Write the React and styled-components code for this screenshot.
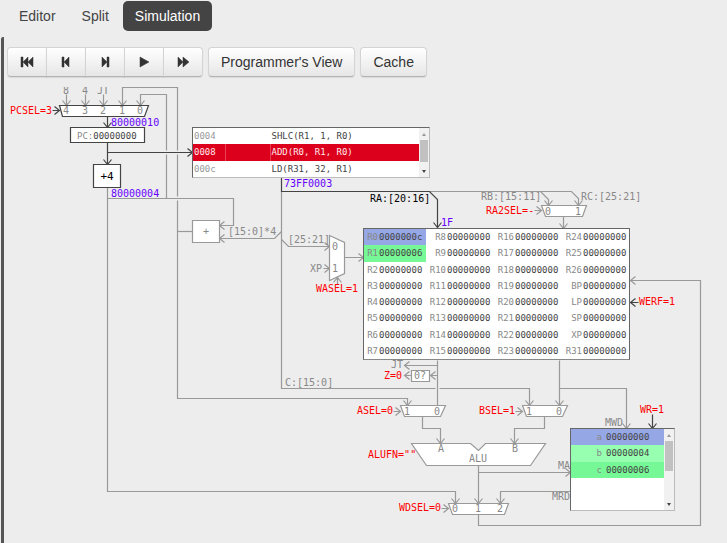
import React from "react";
import styled, { createGlobalStyle } from "styled-components";

const GlobalStyle = createGlobalStyle`
  *, *::before, *::after { box-sizing: border-box; }
  html { background: #ededed; }
  body {
    margin: 0;
    background: #ededed;
    color: #333;
    font: 14px/20px "Liberation Sans", Arial, sans-serif;
  }
`;

const mono = `"DejaVu Sans Mono", "Liberation Mono", monospace`;

const Page = styled.div`
  display: flex;
  flex-direction: column;
  min-height: 100vh;
`;

const Tabs = styled.nav`
  display: flex;
  gap: 2px;
  padding: 1px 7px 6px;
`;

const Tab = styled.a`
  padding: 5px 12px;
  border-radius: 5px;
  color: ${(p) => (p.$active ? "#fff" : "#444")};
  background: ${(p) => (p.$active ? "#444" : "transparent")};
  text-decoration: none;
`;

const Panel = styled.main`
  flex: 1;
  margin-left: 1px;
  border-left: 3px solid #555;
  border-top-left-radius: 2px;
`;

const Toolbar = styled.div`
  display: flex;
  gap: 5px;
  padding: 10px 3px;
`;

const ButtonGroup = styled.div`
  display: flex;
`;

const Button = styled.button`
  display: flex;
  align-items: center;
  justify-content: center;
  height: 30px;
  padding: 0 12px;
  border: 1px solid #d4d4d4;
  border-bottom-color: #b3b3b3;
  border-radius: 4px;
  background: linear-gradient(#fff, #e6e6e6);
  box-shadow: 0 1px 1px rgba(0, 0, 0, 0.08);
  color: #333;
  font: inherit;
  white-space: nowrap;
  cursor: pointer;
`;

const IconButton = styled(Button)`
  width: 40px;
  padding: 0;
  border-radius: 0;
  & + & { margin-left: -1px; }
  &:first-child { border-radius: 4px 0 0 4px; }
  &:last-child { border-radius: 0 4px 4px 0; }
`;

const Viewport = styled.div`
  overflow: hidden;
`;

const Canvas = styled.div`
  position: relative;
  min-width: 700px;
  height: 454px;
`;

const Drawing = styled.svg`
  display: block;
  font: 10px ${mono};
`;

const Node = styled.div`
  position: absolute;
  left: ${(p) => p.$x - 4}px;
  top: ${(p) => p.$y - 87}px;
  width: ${(p) => p.$w}px;
  height: ${(p) => p.$h}px;
  display: flex;
  border: 1px solid #666;
  border-right-color: ${(p) => (p.$inset ? "#bbb" : "#666")};
  border-bottom-color: ${(p) => (p.$inset ? "#bbb" : "#888")};
  background: #fff;
`;

const Table = styled.table`
  flex: 1;
  align-self: flex-start;
  table-layout: fixed;
  border-collapse: collapse;
  width: 0;
  height: ${(p) => p.$h}px;
  font: 9px/12px ${mono};
  color: #444;
`;

const rowColors = {
  blue: "#96a7e6",
  mint: "#96ffb0",
  green: "#77f896",
  red: "#dc001c",
};

const Row = styled.tr`
  background: ${(p) => rowColors[p.$color] || "transparent"};
  color: ${(p) => (p.$color === "red" ? "#ffe8ea" : "inherit")};
`;

const Cell = styled.td`
  padding: 0 0 0 1px;
  white-space: pre;
  vertical-align: middle;
  background: ${(p) => rowColors[p.$color] || "transparent"};
`;

const NameCell = styled(Cell)`
  padding: 0 ${(p) => p.$gap || 0}px 0 0;
  text-align: right;
  color: #888;
`;

const AddressCell = styled(Cell)`
  color: ${(p) => (p.$current ? "#ffe8ea" : "#999")};
  border-right: 1px solid ${(p) => (p.$current ? "#e94054" : "transparent")};
`;

const Scrollbar = styled.div`
  display: flex;
  flex-direction: column;
  align-items: center;
  width: 10px;
  background: #f1f1f1;
`;

const Arrow = styled.span`
  width: 0;
  height: 0;
  margin: ${(p) => (p.$down ? "auto 0 4px" : "5px 0 4px")};
  border: 2px solid transparent;
  border-top: ${(p) => (p.$down ? "3px solid #444" : "0")};
  border-bottom: ${(p) => (p.$down ? "0" : "3px solid #999")};
`;

const Thumb = styled.span`
  width: 8px;
  height: ${(p) => p.$h}px;
  background: #c1c1c1;
`;

const GREY = "#999";
const DARK = "#444";

const transport = [
  ["Reset", "M1 1h2v10H1z M8 1v10L3 6z M13 1v10L8 6z"],
  ["Step back", "M3 1h2v10H3z M10 1v10L5 6z"],
  ["Step forward", "M9 1h2v10H9z M4 1v10l5-5z"],
  ["Play", "M3 1v10l9-5z"],
  ["Fast forward", "M2 1v10l5-5z M7 1v10l6-5z"],
];

function Icon({ d }) {
  return (
    <svg width="14" height="12" viewBox="0 0 14 12" aria-hidden="true">
      <path d={d} fill="#333" stroke="#333" strokeWidth="0.5" strokeLinejoin="round" />
    </svg>
  );
}

const heads = {
  down: "m-4 -5l4 5l4 -5",
  up: "m-4 5l4 -5l4 5",
  right: "m-5 -4l5 4l-5 4",
  left: "m5 -4l-5 4l5 4",
};

function Wire({ d, tip, dir, dark }) {
  const path = tip ? `${d} M${tip}${heads[dir]}` : d;
  return <path d={path} fill="none" stroke={dark ? DARK : GREY} strokeWidth="1.2" />;
}

function Shape({ points, dark }) {
  return <polygon points={points} fill="#fff" stroke={dark ? DARK : GREY} strokeWidth="1.2" />;
}

function Gap({ d }) {
  return <path d={d} fill="none" stroke="#ededed" strokeWidth="4" />;
}

const labels = [
  [66, 94, "8", "#888", "middle"],
  [85, 94, "4", "#888", "middle"],
  [103, 94, "JT", "#888", "middle"],
  [66, 114, "4", "#888", "middle"],
  [85, 114, "3", "#888", "middle"],
  [103, 114, "2", "#888", "middle"],
  [122, 114, "1", "#888", "middle"],
  [140, 114, "0", "#888", "middle"],
  [10, 114, "PCSEL=3", "#f00"],
  [111, 126, "80000010", "#60f"],
  [111, 197, "80000004", "#60f"],
  [284, 187, "73FF0003", "#60f"],
  [441, 226, "1F", "#60f"],
  [370, 202, "RA:[20:16]", "#000"],
  [481, 200, "RB:[15:11]", "#888"],
  [581, 200, "RC:[25:21]", "#888"],
  [486, 214, "RA2SEL=-", "#f00"],
  [548, 215, "0", "#888", "middle"],
  [578, 215, "1", "#888", "middle"],
  [206, 235, "+", "#888", "middle"],
  [228, 235, "[15:0]*4", "#888"],
  [288, 243, "[25:21]", "#888"],
  [310, 272, "XP", "#888"],
  [335, 250, "0", "#888", "middle"],
  [335, 272, "1", "#888", "middle"],
  [316, 292, "WASEL=1", "#f00"],
  [639, 305, "WERF=1", "#f00"],
  [391, 368, "JT", "#888"],
  [384, 379, "Z=0", "#f00"],
  [420, 379, "0?", "#888", "middle"],
  [285, 386, "C:[15:0]", "#888"],
  [357, 414, "ASEL=0", "#f00"],
  [407, 415, "1", "#888", "middle"],
  [437, 415, "0", "#888", "middle"],
  [479, 414, "BSEL=1", "#f00"],
  [529, 415, "1", "#888", "middle"],
  [559, 415, "0", "#888", "middle"],
  [605, 426, "MWD", "#888"],
  [640, 413, "WR=1", "#f00"],
  [441, 452, "A", "#888", "middle"],
  [515, 452, "B", "#888", "middle"],
  [478, 462, "ALU", "#888", "middle"],
  [368, 458, 'ALUFN=""', "#f00"],
  [558, 469, "MA", "#888"],
  [552, 500, "MRD", "#888"],
  [399, 511, "WDSEL=0", "#f00"],
  [455, 512, "0", "#888", "middle"],
  [478, 512, "1", "#888", "middle"],
  [500, 512, "2", "#888", "middle"],
];

function Datapath() {
  return (
    <Drawing width="723" height="454" viewBox="4 87 723 454" role="img" aria-label="Processor datapath">
      <g transform="translate(0.5 0.5)">
        <Wire d="M66 94V105" tip="66 105" dir="down" />
        <Wire d="M85 94V105" tip="85 105" dir="down" />
        <Wire d="M103 94V105" tip="103 105" dir="down" />
        <Wire d="M407 405V398H177V87H122V105" tip="122 105" dir="down" />
        <Wire d="" tip="407 405" dir="down" />
        <Wire d="M166 198V94H140V105" tip="140 105" dir="down" />
        <Gap d="M160 152H182 M171 198H182" />
        <Wire d="M107 187V491H455V503" tip="455 503" dir="down" />
        <Wire d="M107 198H233V225H219" tip="219 225" dir="left" />
        <Wire d="M177 231H192" />
        <Wire d="M281 231L274 238H219" tip="219 238" dir="left" />
        <Wire d="M281 191V388H529V405" tip="529 405" dir="down" />
        <Wire d="M281 239L288 246H329" tip="329 246" dir="right" />
        <Wire d="M323 268H329" tip="329 268" dir="right" />
        <Wire d="M337 284V277" tip="337 277" dir="up" />
        <Wire d="M344 257H363" tip="363 257" dir="right" />
        <Wire d="M429 191H571L578 198V205" tip="578 205" dir="down" />
        <Wire d="M540 191L548 199V205" tip="548 205" dir="down" />
        <Wire d="M534 210H541" tip="541 210" dir="right" />
        <Wire d="M563 216V228" tip="563 228" dir="down" />
        <Gap d="M437 384V392" />
        <Wire d="M437 360V405" />
        <Wire d="M437 365H404" tip="404 365" dir="left" />
        <Wire d="M437 375H430" tip="430 375" dir="left" />
        <Wire d="M411 375H404" tip="404 375" dir="left" />
        <Wire d="M559 360V405" tip="559 405" dir="down" />
        <Wire d="M559 388H626V428" tip="626 428" dir="down" />
        <Wire d="M393 411H400" tip="400 411" dir="right" />
        <Wire d="M515 411H522" tip="522 411" dir="right" />
        <Wire d="M422 416V428H440V443" tip="440 443" dir="down" />
        <Wire d="M544 416V428H514V443" tip="514 443" dir="down" />
        <Wire d="M478 465V503" tip="478 503" dir="down" />
        <Wire d="M478 472H570" tip="570 472" dir="right" />
        <Wire d="M570 491H500V503" tip="500 503" dir="down" />
        <Wire d="M441 508H448" tip="448 508" dir="right" />
        <Wire d="M478 514V525H700V280H630" tip="630 280" dir="left" />

        <Wire d="M52 110H59" tip="59 110" dir="right" dark />
        <Wire d="M107 116V127" tip="107 127" dir="down" dark />
        <Wire d="M107 142V164" tip="107 164" dir="down" dark />
        <Wire d="M107 152H192" tip="192 152" dir="right" dark />
        <Wire d="M281 177V191H429L437 199V227" tip="437 227" dir="down" dark />
        <Wire d="M638 302H630" tip="630 302" dir="left" dark />
        <Wire d="M652 414V428" tip="652 428" dir="down" dark />

        <Shape points="59,105 148,105 144,116 62,116" dark />
        <Shape points="70,127 144,127 144,142 70,142" dark />
        <Shape points="93,164 120,164 120,187 93,187" dark />
        <Shape points="192,220 219,220 219,242 192,242" />
        <Shape points="329,235 344,242 344,273 329,280" />
        <Shape points="541,205 586,205 582,216 545,216" />
        <Shape points="411,370 429,370 429,381 411,381" />
        <Shape points="400,405 445,405 440,416 404,416" />
        <Shape points="522,405 567,405 562,416 526,416" />
        <Shape points="411,443 470,443 478,450 485,443 545,443 530,465 426,465" />
        <Shape points="448,503 508,503 504,514 452,514" />
      </g>

      {labels.map(([x, y, text, fill, anchor]) => (
        <text key={`${x}-${y}`} x={x} y={y} fill={fill} textAnchor={anchor}>
          {text}
        </text>
      ))}
      <text x="77" y="139" fontSize="9" fill="#888">
        PC:<tspan fill="#444">00000000</tspan>
      </text>
      <text x="107" y="180" fontSize="11" fill="#000" textAnchor="middle">
        +4
      </text>
    </Drawing>
  );
}

const instructions = [
  ["0004", "SHLC(R1, 1, R0)"],
  ["0008", "ADD(R0, R1, R0)"],
  ["000c", "LD(R31, 32, R1)"],
];

const registerNames = [
  ["R0", "R8", "R16", "R24"],
  ["R1", "R9", "R17", "R25"],
  ["R2", "R10", "R18", "R26"],
  ["R3", "R11", "R19", "BP"],
  ["R4", "R12", "R20", "LP"],
  ["R5", "R13", "R21", "SP"],
  ["R6", "R14", "R22", "XP"],
  ["R7", "R15", "R23", "R31"],
];

const registerState = {
  R0: { value: "0000000c", color: "blue" },
  R1: { value: "00000006", color: "green" },
};

const memory = [
  ["a", "00000000", "blue"],
  ["b", "00000004", "mint"],
  ["c", "00000006", "green"],
];

function Program() {
  return (
    <Node $x={192} $y={127} $w={238} $h={51} $inset>
      <Table $h={49}>
        <colgroup>
          <col width="32" />
          <col width="45" />
          <col />
        </colgroup>
        <tbody>
          {instructions.map(([address, code]) => {
            const current = address === "0008";
            return (
              <Row key={address} $color={current ? "red" : undefined}>
                <AddressCell $current={current}>{address}</AddressCell>
                <AddressCell $current={current} />
                <Cell>{code}</Cell>
              </Row>
            );
          })}
        </tbody>
      </Table>
      <Scrollbar>
        <Arrow />
        <Thumb $h={22} />
        <Arrow $down />
      </Scrollbar>
    </Node>
  );
}

function Registers() {
  return (
    <Node $x={363} $y={228} $w={267} $h={132}>
      <Table $h={130}>
        <colgroup>
          <col width="14" />
          <col width="48" />
          <col width="20" />
          <col width="48" />
          <col width="20" />
          <col width="48" />
          <col width="20" />
          <col />
        </colgroup>
        <tbody>
          {registerNames.map((names) => (
            <Row key={names[0]}>
              {names.map((name) => {
                const { value = "00000000", color } = registerState[name] || {};
                return (
                  <React.Fragment key={name}>
                    <NameCell $color={color}>{name}</NameCell>
                    <Cell $color={color}>{value}</Cell>
                  </React.Fragment>
                );
              })}
            </Row>
          ))}
        </tbody>
      </Table>
    </Node>
  );
}

function Memory() {
  return (
    <Node $x={570} $y={428} $w={105} $h={83} $inset>
      <Table $h={49}>
        <colgroup>
          <col width="34" />
          <col />
        </colgroup>
        <tbody>
          {memory.map(([name, value, color]) => (
            <Row key={name} $color={color}>
              <NameCell $gap={3}>{name}</NameCell>
              <Cell>{value}</Cell>
            </Row>
          ))}
        </tbody>
      </Table>
      <Scrollbar>
        <Arrow />
        <Thumb $h={30} />
        <Arrow $down />
      </Scrollbar>
    </Node>
  );
}

export default function App() {
  return (
    <Page>
      <GlobalStyle />
      <Tabs>
        <Tab href="#editor">Editor</Tab>
        <Tab href="#split">Split</Tab>
        <Tab href="#simulation" $active aria-current="page">
          Simulation
        </Tab>
      </Tabs>
      <Panel>
        <Toolbar>
          <ButtonGroup>
            {transport.map(([label, d]) => (
              <IconButton key={label} type="button" aria-label={label}>
                <Icon d={d} />
              </IconButton>
            ))}
          </ButtonGroup>
          <Button type="button">Programmer's View</Button>
          <Button type="button">Cache</Button>
        </Toolbar>
        <Viewport>
          <Canvas>
            <Datapath />
            <Program />
            <Registers />
            <Memory />
          </Canvas>
        </Viewport>
      </Panel>
    </Page>
  );
}
